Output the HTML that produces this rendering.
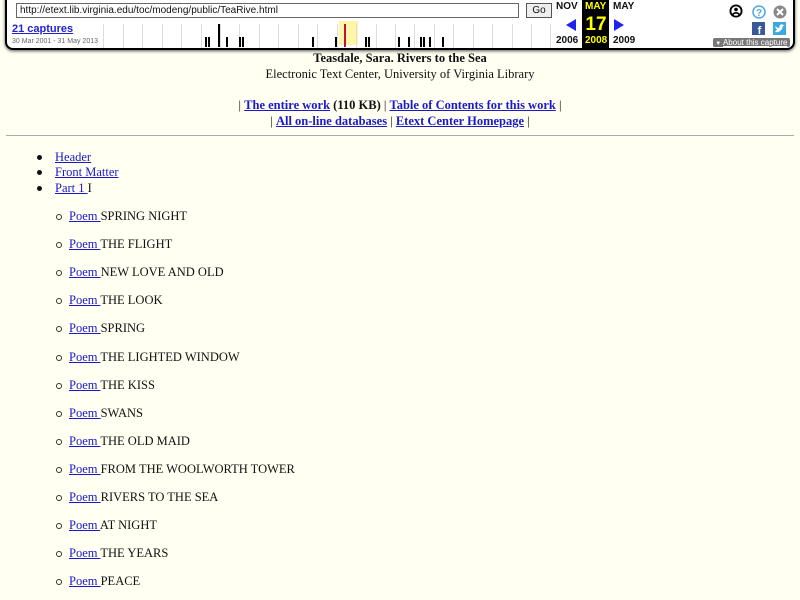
<!DOCTYPE html>
<html><head><meta charset="utf-8"><style>
body{margin:0;width:800px;height:600px;overflow:hidden;background:#fffff2;font-family:"Liberation Serif",serif;font-size:12.5px;color:#111;position:relative}
a{color:#1a1acc;text-decoration:underline}
.t{position:absolute;line-height:16px;white-space:nowrap}
.c{left:0;width:800px;text-align:center}
#wb{position:absolute;left:5px;top:-3px;width:786px;height:51px;background:#fff;border:2px solid #000;border-top:none;border-radius:0 0 8px 8px;box-shadow:0 1px 3px #555;font-family:"Liberation Sans",sans-serif}
.s{position:absolute;top:24px;width:1px;height:24px;background:#ddd}
.b{position:absolute;top:37px;width:2px;height:10px;background:#000}
.bul{position:absolute;width:5px;height:5px;border-radius:50%;background:#111}
.circ{position:absolute;width:4px;height:4px;border-radius:50%;border:1px solid #333}
</style></head><body>
<div id="wb">
 <div style="position:absolute;left:9px;top:6px;width:498px;height:13px;border:1px solid #666;font-size:10px;line-height:13px;padding-left:3px">http://etext.lib.virginia.edu/toc/modeng/public/TeaRive.html</div>
 <div style="position:absolute;left:519px;top:6px;width:24px;height:13px;border:1px solid #555;background:#eee;font-size:10px;line-height:13px;text-align:center">Go</div>
 <div style="position:absolute;left:5px;top:26px;font-size:11px;font-weight:bold"><a style="color:#22c">21 captures</a></div>
 <div style="position:absolute;left:5px;top:41px;font-size:7px;color:#666">30 Mar 2001 - 31 May 2013</div>
 <div style="position:absolute;left:332px;top:24px;width:19px;height:24px;background:#fff5a8"></div>
</div>
<div id="spark"></div>
<div style="position:absolute;left:582px;top:0;width:27px;height:49px;background:#000"></div>
<div class="t" style="left:556px;top:1px;font:bold 10px 'Liberation Sans',sans-serif">NOV</div>
<div class="t" style="left:585px;top:1px;font:bold 10px 'Liberation Sans',sans-serif;color:#ff0">MAY</div>
<div class="t" style="left:613px;top:1px;font:bold 10px 'Liberation Sans',sans-serif">MAY</div>
<div class="t" style="left:583px;top:15px;width:26px;text-align:center;font:bold 19px/20px 'Liberation Sans',sans-serif;color:#ff0">17</div>
<div style="position:absolute;left:566px;top:19px;border:6px solid transparent;border-right:10px solid #2222ee;border-left:none"></div>
<div style="position:absolute;left:614px;top:19px;border:6px solid transparent;border-left:10px solid #2222ee;border-right:none"></div>
<div class="t" style="left:556px;top:35px;font:bold 10px 'Liberation Sans',sans-serif">2006</div>
<div class="t" style="left:585px;top:35px;font:bold 10px 'Liberation Sans',sans-serif;color:#ff0">2008</div>
<div class="t" style="left:613px;top:35px;font:bold 10px 'Liberation Sans',sans-serif">2009</div>
<svg style="position:absolute;left:728px;top:3px" width="60" height="34">
 <circle cx="8" cy="8" r="6.5" fill="#000"/><circle cx="8" cy="8" r="4.7" fill="#fff"/><circle cx="8" cy="6.5" r="1.8" fill="#000"/><path d="M4.5 11.5 Q8 8 11.5 11.5" stroke="#000" stroke-width="1.6" fill="none"/>
 <circle cx="31" cy="9" r="6" fill="none" stroke="#4aa8e8" stroke-width="1.5"/><text x="31" y="13" font-size="10" font-family="Liberation Sans" font-weight="bold" fill="#4aa8e8" text-anchor="middle">?</text>
 <circle cx="52" cy="9" r="6.5" fill="#888"/><path d="M49 6 L55 12 M55 6 L49 12" stroke="#fff" stroke-width="2"/>
 <rect x="24" y="19" width="13" height="13" fill="#3b5998"/><text x="31.5" y="31" font-size="11" font-family="Liberation Sans" font-weight="bold" fill="#fff" text-anchor="middle">f</text>
 <rect x="45" y="19" width="13" height="13" fill="#39a9e0"/><path d="M47 29 Q51 30 54 26 L55 23 L57 22.5 L55.5 22 Q54 20.5 52 22 Q51 23.5 51.5 25 Q49 25 47.5 23 Q47 25.5 49 26.5 Q48 27.5 47 29Z" fill="#fff"/>
</svg>
<div style="position:absolute;left:713px;top:38px;width:77px;height:9px;background:#777;border-radius:2px;font:8px/9px 'Liberation Sans',sans-serif;color:#fff;white-space:nowrap;overflow:hidden">&nbsp;<span style="font-size:6px">▼</span> <u>About this capture</u></div>

<div class="t c" style="top:50px;font-weight:bold">Teasdale, Sara. Rivers to the Sea</div>
<div class="t c" style="top:66px">Electronic Text Center, University of Virginia Library</div>
<div class="t c" style="top:97px">| <a><b>The entire work</b></a> <b>(110 KB)</b> | <a><b>Table of Contents for this work</b></a> |</div>
<div class="t c" style="top:113px">| <a><b>All on-line databases</b></a> | <a><b>Etext Center Homepage</b></a> |</div>
<div style="position:absolute;left:6px;top:135px;width:788px;height:1px;background:#aaa"></div>

<div class="bul" style="left:37px;top:155px"></div><div class="t" style="left:55px;top:149px"><a>Header</a></div>
<div class="bul" style="left:37px;top:170px"></div><div class="t" style="left:55px;top:164px"><a>Front Matter</a></div>
<div class="bul" style="left:37px;top:186px"></div><div class="t" style="left:55px;top:180px"><a>Part 1 </a> I</div>
<div id="poems"></div>
<script>
var sp='',xs=[103,123,142,162,181,201,220,239,259,278,298,317,337,356,376,395,414,434,453,473,492,512,531,550];
xs.forEach(function(x){sp+='<div class="s" style="left:'+x+'px"></div>'});
[[205,37],[207.5,37],[218,24],[226,37],[239,37],[241.5,37],[312,37],[335,37],[365,37],[367.5,37],[398,37],[408,37],[420,37],[422.5,37],[429,37],[442,37]].forEach(function(b){sp+='<div class="b" style="left:'+b[0]+'px;top:'+b[1]+'px;height:'+(47-b[1])+'px;width:'+(b[1]<30?1.5:2)+'px"></div>'});
sp+='<div class="b" style="left:344px;top:24px;height:23px;width:2px;background:#c01040"></div>';
document.getElementById('spark').innerHTML=sp;
var p=['SPRING NIGHT','THE FLIGHT','NEW LOVE AND OLD','THE LOOK','SPRING','THE LIGHTED WINDOW','THE KISS','SWANS','THE OLD MAID','FROM THE WOOLWORTH TOWER','RIVERS TO THE SEA','AT NIGHT','THE YEARS','PEACE'],h='';
p.forEach(function(t,i){var y=216+i*28.1;h+='<div class="circ" style="left:56px;top:'+(y-2)+'px"></div><div class="t" style="left:69px;top:'+(y-8)+'px"><a>Poem </a>'+t+'</div>'});
document.getElementById('poems').innerHTML=h;
</script>
</body></html>
